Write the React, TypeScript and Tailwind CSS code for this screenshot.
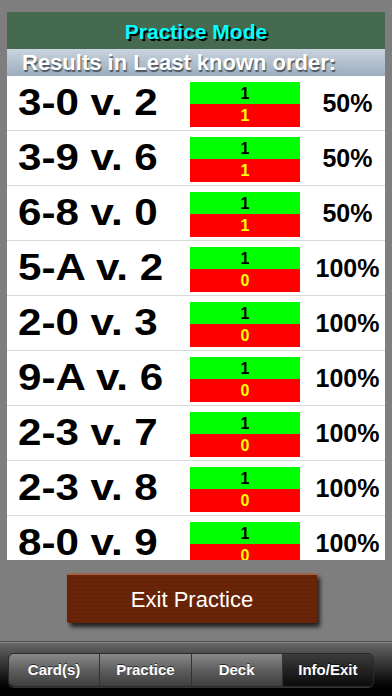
import React from "react";

const rows = [
  { label: "3-0 v. 2", right: 1, wrong: 1, pct: "50%" },
  { label: "3-9 v. 6", right: 1, wrong: 1, pct: "50%" },
  { label: "6-8 v. 0", right: 1, wrong: 1, pct: "50%" },
  { label: "5-A v. 2", right: 1, wrong: 0, pct: "100%" },
  { label: "2-0 v. 3", right: 1, wrong: 0, pct: "100%" },
  { label: "9-A v. 6", right: 1, wrong: 0, pct: "100%" },
  { label: "2-3 v. 7", right: 1, wrong: 0, pct: "100%" },
  { label: "2-3 v. 8", right: 1, wrong: 0, pct: "100%" },
  { label: "8-0 v. 9", right: 1, wrong: 0, pct: "100%" },
];

const tabs = ["Card(s)", "Practice", "Deck", "Info/Exit"];

export default function App() {
  return (
    <div className="flex h-[696px] w-[392px] flex-col overflow-hidden bg-[#7e7e7e] font-['Liberation_Sans',Arial,sans-serif]">
      {/* results panel */}
      <div className="mx-[7px] mt-[12px] flex w-[378px] flex-col">
        <div className="flex h-[37px] items-center justify-center bg-[#466a50] pt-[2px] text-[21px] font-bold text-[#00ffff] [text-shadow:2px_2px_0_#000]">
          Practice Mode
        </div>
        <div className="flex h-[27px] items-center bg-gradient-to-b from-[#c9d4de] to-[#9badbf] pl-[15px] text-[22px] font-bold leading-none text-white [text-shadow:1px_2px_1px_#4a5560]">
          Results in Least known order:
        </div>
        <div className="h-[484px] overflow-hidden bg-white">
          {rows.map((r, i) => (
            <div key={i} className="flex h-[55px] items-start border-b border-[#d9d9d9]">
              <div className="w-[183px] self-center pl-[11px]">
                <div className="origin-left scale-x-[1.17] whitespace-nowrap text-[36px] font-bold leading-none text-black">
                  {r.label}
                </div>
              </div>
              <div className="mt-[6px] flex w-[110px] flex-col text-[16px] font-bold leading-none">
                <div className="flex h-[22px] items-center justify-center bg-[#00ff00] pt-[1px] text-black">{r.right}</div>
                <div className="flex h-[23px] items-center justify-center bg-[#ff0000] pt-[1px] text-[#ffff00]">{r.wrong}</div>
              </div>
              <div className="flex flex-1 self-center justify-center pl-[10px] text-[25px] font-bold leading-none text-black">
                {r.pct}
              </div>
            </div>
          ))}
        </div>
      </div>

      {/* exit button */}
      <div className="flex h-[81px] items-start justify-center pr-[8px] pt-[13px]">
        <div className="flex h-[50px] w-[250px] items-center justify-center rounded-[2px] border-t-2 border-[#a0644a] bg-[repeating-linear-gradient(180deg,#6a2407_0px,#6a2407_2px,#602005_3px,#6c280a_4px)] text-[22px] text-white shadow-[3px_4px_4px_rgba(0,0,0,0.75)]">
          Exit Practice
        </div>
      </div>

      {/* toolbar */}
      <div className="flex flex-1 flex-col border-t border-[#4e4e4e] bg-gradient-to-b from-[#6a6a6a] via-[#2a2a2a] to-[#000]">
        <div className="border-t border-[#8a8a8a]"></div>
        <div className="mx-[8px] mt-[10px] flex h-[34px] w-[366px] overflow-hidden rounded-[6px] border border-[#2a2a2a] shadow-[0_1px_0_rgba(255,255,255,0.2)]">
          {tabs.map((t, i) => (
            <div
              key={t}
              className={`flex flex-1 items-center justify-center text-[15px] font-bold text-white [text-shadow:0_-1px_0_rgba(0,0,0,0.6)] ${
                i === 3
                  ? "bg-gradient-to-b from-[#3c3c3c] to-[#0c0c0c]"
                  : "bg-gradient-to-b from-[#8a8a8a] via-[#5e5e5e] to-[#3e3e3e]"
              } ${i > 0 ? "border-l border-[#333]" : ""}`}
            >
              {t}
            </div>
          ))}
        </div>
      </div>
    </div>
  );
}
